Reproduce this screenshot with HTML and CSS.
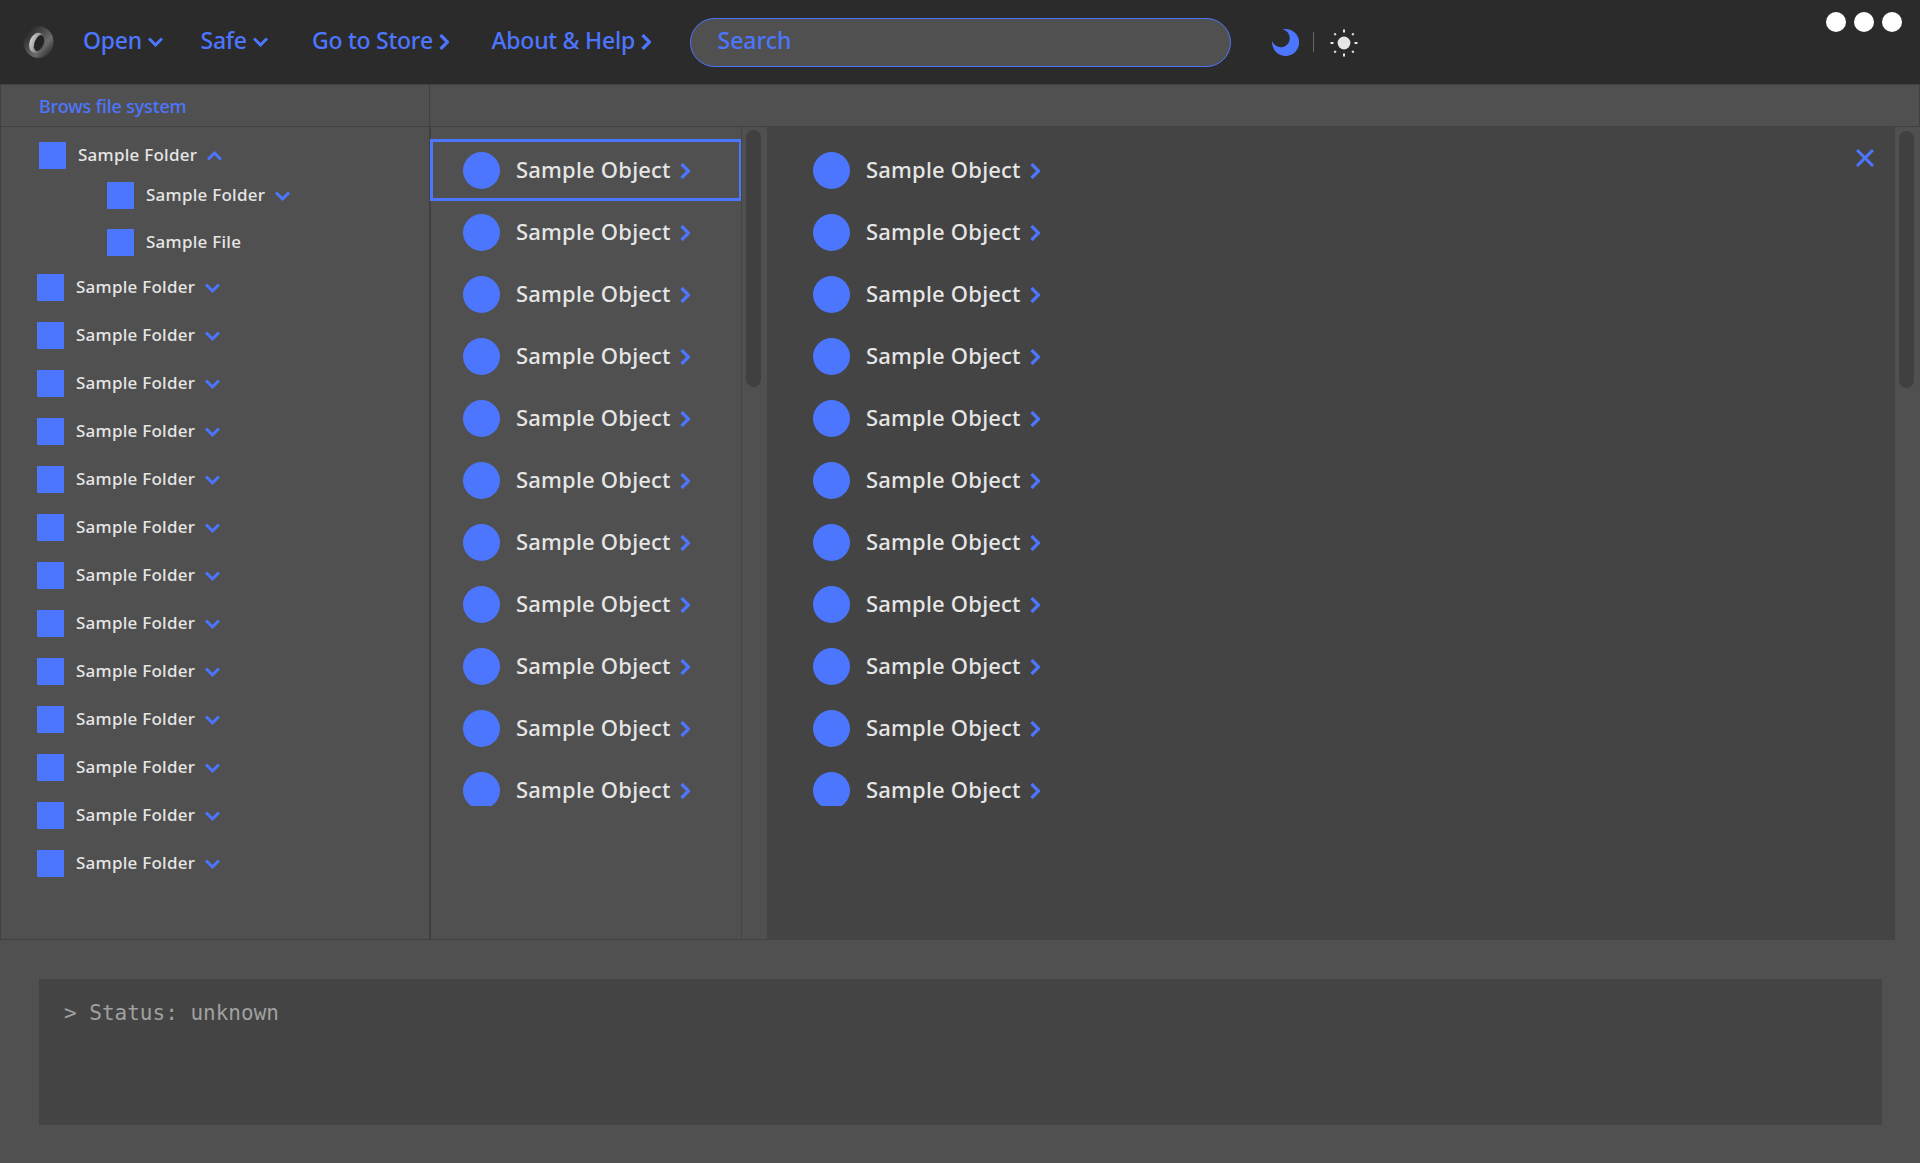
FILE: index.html
```html
<!DOCTYPE html>
<html lang="en">
<head>
    <meta charset="UTF-8">
    <title>File Browser</title>
    <link rel="stylesheet" href="styles.css">
</head>
<body>
    <svg class="icon-defs" width="0" height="0">
        <defs>
            <symbol id="chev-down" viewBox="0 0 15 10"><polyline points="1,1.5 7.5,8 14,1.5" fill="none" stroke="currentColor" stroke-width="3"/></symbol>
            <symbol id="chev-up" viewBox="0 0 15 10"><polyline points="1,8.5 7.5,2 14,8.5" fill="none" stroke="currentColor" stroke-width="3"/></symbol>
            <symbol id="chev-right" viewBox="0 0 10 16"><polyline points="1.5,1 8.5,8 1.5,15" fill="none" stroke="currentColor" stroke-width="3.2"/></symbol>
            <linearGradient id="ringGrad" x1="0" y1="0" x2="1" y2="1">
                <stop offset="0" stop-color="#141414"/>
                <stop offset="0.4" stop-color="#4a4a4a"/>
                <stop offset="0.65" stop-color="#6c6c6c"/>
                <stop offset="1" stop-color="#121212"/>
            </linearGradient>
            <linearGradient id="holeGrad" x1="0" y1="0" x2="1" y2="0">
                <stop offset="0" stop-color="#cfcfcf"/>
                <stop offset="0.4" stop-color="#a0a0a0"/>
                <stop offset="1" stop-color="#4c4c4c"/>
            </linearGradient>
        </defs>
    </svg>

    <header class="topbar">
        <svg class="logo" viewBox="0 0 31 32">
            <ellipse cx="15.5" cy="16" rx="15" ry="16" fill="url(#ringGrad)"/>
            <ellipse cx="14" cy="17" rx="7.5" ry="10.5" transform="rotate(20 14 17)" fill="url(#holeGrad)"/>
            <ellipse cx="16" cy="17" rx="4.4" ry="8.4" transform="rotate(22 16 17)" fill="#232323"/>
        </svg>
        <nav class="nav">
            <a class="nav-item">Open <svg class="chev-nav-down"><use href="#chev-down"/></svg></a>
            <a class="nav-item">Safe <svg class="chev-nav-down"><use href="#chev-down"/></svg></a>
            <a class="nav-item">Go to Store <svg class="chev-nav-right"><use href="#chev-right"/></svg></a>
            <a class="nav-item">About &amp; Help <svg class="chev-nav-right"><use href="#chev-right"/></svg></a>
        </nav>
        <div class="search">Search</div>
        <div class="theme-switch">
            <svg class="moon" viewBox="0 0 27 27"><path d="M10.5 0.4 A13.5 13.5 0 1 1 0.2 12 A9 9 0 1 0 10.5 0.4 Z" fill="#4d76ff"/></svg>
            <span class="theme-divider"></span>
            <svg class="sun" viewBox="0 0 28 28">
                <circle cx="14" cy="14" r="6.4" fill="#e6e6e6"/>
                <g stroke="#e6e6e6" stroke-width="2">
                    <line x1="14" y1="0.5" x2="14" y2="3.5"/>
                    <line x1="14" y1="24.5" x2="14" y2="27.5"/>
                    <line x1="0.5" y1="14" x2="3.5" y2="14"/>
                    <line x1="24.5" y1="14" x2="27.5" y2="14"/>
                    <line x1="4.4" y1="4.4" x2="5.8" y2="6"/>
                    <line x1="22.2" y1="22" x2="23.6" y2="23.6"/>
                    <line x1="4.4" y1="23.6" x2="5.8" y2="22"/>
                    <line x1="22.2" y1="6" x2="23.6" y2="4.4"/>
                </g>
            </svg>
        </div>
        <div class="window-dots">
            <span class="dot"></span>
            <span class="dot"></span>
            <span class="dot"></span>
        </div>
    </header>

    <main class="browser">
        <div class="sub-head sub-head-left">Brows file system</div>
        <div class="sub-head"></div>

        <aside class="tree">
            <div class="tree-row tree-row-open"><span class="square"></span>Sample Folder <svg class="chev-tree"><use href="#chev-up"/></svg></div>
            <div class="tree-sub">
                <div class="tree-row"><span class="square"></span>Sample Folder <svg class="chev-tree"><use href="#chev-down"/></svg></div>
                <div class="tree-row"><span class="square"></span>Sample File</div>
            </div>
            <div class="tree-row"><span class="square"></span>Sample Folder <svg class="chev-tree"><use href="#chev-down"/></svg></div>
            <div class="tree-row"><span class="square"></span>Sample Folder <svg class="chev-tree"><use href="#chev-down"/></svg></div>
            <div class="tree-row"><span class="square"></span>Sample Folder <svg class="chev-tree"><use href="#chev-down"/></svg></div>
            <div class="tree-row"><span class="square"></span>Sample Folder <svg class="chev-tree"><use href="#chev-down"/></svg></div>
            <div class="tree-row"><span class="square"></span>Sample Folder <svg class="chev-tree"><use href="#chev-down"/></svg></div>
            <div class="tree-row"><span class="square"></span>Sample Folder <svg class="chev-tree"><use href="#chev-down"/></svg></div>
            <div class="tree-row"><span class="square"></span>Sample Folder <svg class="chev-tree"><use href="#chev-down"/></svg></div>
            <div class="tree-row"><span class="square"></span>Sample Folder <svg class="chev-tree"><use href="#chev-down"/></svg></div>
            <div class="tree-row"><span class="square"></span>Sample Folder <svg class="chev-tree"><use href="#chev-down"/></svg></div>
            <div class="tree-row"><span class="square"></span>Sample Folder <svg class="chev-tree"><use href="#chev-down"/></svg></div>
            <div class="tree-row"><span class="square"></span>Sample Folder <svg class="chev-tree"><use href="#chev-down"/></svg></div>
            <div class="tree-row"><span class="square"></span>Sample Folder <svg class="chev-tree"><use href="#chev-down"/></svg></div>
            <div class="tree-row"><span class="square"></span>Sample Folder <svg class="chev-tree"><use href="#chev-down"/></svg></div>
        </aside>

        <div class="panes">
            <section class="pane pane-list">
                <div class="objects">
                    <div class="object object-selected"><span class="circle"></span>Sample Object <svg class="chev-object"><use href="#chev-right"/></svg></div>
                    <div class="object"><span class="circle"></span>Sample Object <svg class="chev-object"><use href="#chev-right"/></svg></div>
                    <div class="object"><span class="circle"></span>Sample Object <svg class="chev-object"><use href="#chev-right"/></svg></div>
                    <div class="object"><span class="circle"></span>Sample Object <svg class="chev-object"><use href="#chev-right"/></svg></div>
                    <div class="object"><span class="circle"></span>Sample Object <svg class="chev-object"><use href="#chev-right"/></svg></div>
                    <div class="object"><span class="circle"></span>Sample Object <svg class="chev-object"><use href="#chev-right"/></svg></div>
                    <div class="object"><span class="circle"></span>Sample Object <svg class="chev-object"><use href="#chev-right"/></svg></div>
                    <div class="object"><span class="circle"></span>Sample Object <svg class="chev-object"><use href="#chev-right"/></svg></div>
                    <div class="object"><span class="circle"></span>Sample Object <svg class="chev-object"><use href="#chev-right"/></svg></div>
                    <div class="object"><span class="circle"></span>Sample Object <svg class="chev-object"><use href="#chev-right"/></svg></div>
                    <div class="object"><span class="circle"></span>Sample Object <svg class="chev-object"><use href="#chev-right"/></svg></div>
                </div>
            </section>
            <div class="scroll-track"><span class="scroll-thumb"></span></div>

            <section class="pane pane-detail">
                <div class="objects">
                    <div class="object"><span class="circle"></span>Sample Object <svg class="chev-object"><use href="#chev-right"/></svg></div>
                    <div class="object"><span class="circle"></span>Sample Object <svg class="chev-object"><use href="#chev-right"/></svg></div>
                    <div class="object"><span class="circle"></span>Sample Object <svg class="chev-object"><use href="#chev-right"/></svg></div>
                    <div class="object"><span class="circle"></span>Sample Object <svg class="chev-object"><use href="#chev-right"/></svg></div>
                    <div class="object"><span class="circle"></span>Sample Object <svg class="chev-object"><use href="#chev-right"/></svg></div>
                    <div class="object"><span class="circle"></span>Sample Object <svg class="chev-object"><use href="#chev-right"/></svg></div>
                    <div class="object"><span class="circle"></span>Sample Object <svg class="chev-object"><use href="#chev-right"/></svg></div>
                    <div class="object"><span class="circle"></span>Sample Object <svg class="chev-object"><use href="#chev-right"/></svg></div>
                    <div class="object"><span class="circle"></span>Sample Object <svg class="chev-object"><use href="#chev-right"/></svg></div>
                    <div class="object"><span class="circle"></span>Sample Object <svg class="chev-object"><use href="#chev-right"/></svg></div>
                    <div class="object"><span class="circle"></span>Sample Object <svg class="chev-object"><use href="#chev-right"/></svg></div>
                </div>
                <svg class="close" viewBox="0 0 18 18"><path d="M1 1 L17 17 M17 1 L1 17" fill="none" stroke="#4d76ff" stroke-width="3"/></svg>
            </section>
            <div class="scroll-track scroll-track-end"><span class="scroll-thumb"></span></div>
        </div>
    </main>

    <footer class="console-wrap">
        <div class="console">&gt; Status: unknown</div>
    </footer>
</body>
</html>
```

FILE: styles.css
```css
html, body {
    height: 100%;
}
body {
    margin: 0;
    display: flex;
    flex-direction: column;
    height: 1163px;
    overflow: hidden;
    background-color: #505050;
    color: #e6e6e6;
    font-family: "Noto Sans", "Open Sans", sans-serif;
    font-weight: 500;
}
.icon-defs {
    position: absolute;
}

/* top bar */
.topbar {
    height: 84px;
    flex: none;
    display: flex;
    align-items: center;
    padding-left: 23px;
    background-color: #2b2b2b;
    color: #4d76ff;
}
.logo {
    width: 31px;
    height: 32px;
    margin-right: 29px;
    flex: none;
}
.nav {
    display: grid;
    grid-template-columns: 117.5px 111.5px 179.5px 198px;
    font-size: 23px;
    letter-spacing: -0.25px;
}
.nav-item {
    display: flex;
    align-items: center;
    gap: 6px;
    padding-bottom: 4px;
}
.chev-nav-down {
    width: 15px;
    height: 10px;
    margin-top: 4px;
}
.chev-nav-right {
    width: 10px;
    height: 16px;
    margin-top: 3px;
}
.search {
    width: 541px;
    height: 49px;
    box-sizing: border-box;
    display: flex;
    align-items: center;
    padding: 0 0 5px 27px;
    background-color: #505050;
    border: 1px solid #4d76ff;
    border-radius: 25px;
    font-size: 23px;
}
.theme-switch {
    display: flex;
    align-items: center;
    margin-left: 41px;
}
.moon {
    width: 27px;
    height: 27px;
}
.theme-divider {
    width: 1px;
    height: 20px;
    margin: 0 16px 0 14px;
    background-color: #666;
}
.sun {
    width: 28px;
    height: 28px;
    margin-top: 2px;
}
.window-dots {
    display: flex;
    gap: 8px;
    align-self: flex-start;
    margin: 12px 18px 0 auto;
}
.dot {
    width: 20px;
    height: 20px;
    border-radius: 50%;
    background-color: #fff;
}

/* browser */
.browser {
    height: 856px;
    flex: none;
    display: grid;
    grid-template-columns: 430px 1fr;
    grid-template-rows: 43px 1fr;
    min-height: 0;
}
.sub-head {
    box-sizing: border-box;
    border: 1px solid #404040;
    border-left: 0;
}
.sub-head-left {
    display: flex;
    align-items: center;
    padding-left: 38px;
    border-left: 1px solid #404040;
    color: #4d76ff;
    font-size: 18px;
    letter-spacing: -0.15px;
}
.tree {
    box-sizing: border-box;
    padding: 8px 0 0 36px;
    border-left: 1px solid #404040;
    border-right: 1px solid #404040;
    border-bottom: 1px solid #404040;
    font-size: 17px;
    letter-spacing: 0.25px;
}
.tree-row {
    height: 41px;
    box-sizing: border-box;
    margin-bottom: 7px;
    padding-bottom: 2px;
    display: flex;
    align-items: center;
    white-space: pre;
}
.tree-row-open {
    margin-left: 2px;
}
.tree-sub {
    margin: -8px 0 -2px 0;
    padding-left: 70px;
}
.tree-sub .tree-row {
    margin-bottom: 6px;
}
.square {
    width: 27px;
    height: 27px;
    margin: 2px 12px 0 0;
    background-color: #4d76ff;
    flex: none;
}
.chev-tree {
    width: 15px;
    height: 10px;
    margin: 3px 0 0 5px;
    color: #4d76ff;
}

/* object panes */
.panes {
    display: flex;
    min-height: 0;
    box-shadow: inset 1px 0 #404040;
}
.pane {
    position: relative;
    overflow: hidden;
}
.pane-list {
    width: 312px;
    flex: none;
    box-sizing: border-box;
    border-right: 1px solid #444;
    border-bottom: 1px solid #404040;
}
.pane-detail {
    flex: 1;
    padding-left: 46px;
    background-color: #444;
}
.objects {
    height: 679px;
    box-sizing: border-box;
    padding-top: 12px;
    overflow: hidden;
    font-size: 22px;
    letter-spacing: 0.2px;
}
.object {
    height: 62px;
    box-sizing: border-box;
    padding-bottom: 2px;
    display: flex;
    align-items: center;
    white-space: pre;
}
.pane-list .object {
    padding-left: 33px;
}
.pane-list .object-selected {
    width: 312px;
    padding-left: 30px;
    border: 3px solid #4d76ff;
}
.circle {
    width: 37px;
    height: 37px;
    margin: 2px 16px 0 0;
    border-radius: 50%;
    background-color: #4d76ff;
    flex: none;
}
.chev-object {
    width: 10px;
    height: 16px;
    margin: 4px 0 0 3px;
    color: #4d76ff;
}
.close {
    position: absolute;
    top: 22px;
    right: 21px;
    width: 18px;
    height: 18px;
}
.scroll-track {
    width: 25px;
    flex: none;
    box-sizing: border-box;
    padding: 3px 0 0 4px;
    border-bottom: 1px solid #404040;
}
.scroll-track-end {
    padding-top: 4px;
    border-bottom: 0;
}
.scroll-thumb {
    display: block;
    width: 15px;
    height: 257px;
    border-radius: 8px;
    background-color: #404040;
}

/* status console */
.console-wrap {
    flex: 1;
    padding: 39px 38px 38px 39px;
    display: flex;
}
.console {
    flex: 1;
    box-sizing: border-box;
    padding: 22px 25px;
    background-color: #444;
    color: #a0a0a0;
    font-family: "DejaVu Sans Mono", "Liberation Mono", monospace;
    font-size: 21px;
    font-weight: 400;
}
```
